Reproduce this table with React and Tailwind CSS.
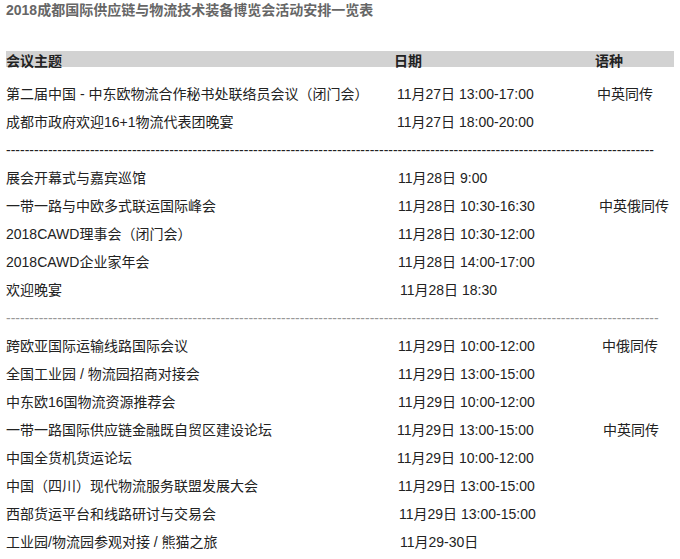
import React from 'react';

const font = "font-['Liberation_Sans','Noto_Sans_CJK_SC',sans-serif]";

// each row: topic, date, language, small x nudges for date/lang columns
const groups = [
  [
    ['第二届中国 - 中东欧物流合作秘书处联络员会议（闭门会）', '11月27日 13:00-17:00', '中英同传', 0, 0],
    ['成都市政府欢迎16+1物流代表团晚宴', '11月27日 18:00-20:00', '', 0, 0],
  ],
  [
    ['展会开幕式与嘉宾巡馆', '11月28日 9:00', '', 1, 0],
    ['一带一路与中欧多式联运国际峰会', '11月28日 10:30-16:30', '中英俄同传', 1, 2],
    ['2018CAWD理事会（闭门会）', '11月28日 10:30-12:00', '', 1, 0],
    ['2018CAWD企业家年会', '11月28日 14:00-17:00', '', 1, 0],
    ['欢迎晚宴', '11月28日 18:30', '', 3, 0],
  ],
  [
    ['跨欧亚国际运输线路国际会议', '11月29日 10:00-12:00', '中俄同传', 1, 5],
    ['全国工业园 / 物流园招商对接会', '11月29日 13:00-15:00', '', 1, 0],
    ['中东欧16国物流资源推荐会', '11月29日 10:00-12:00', '', 1, 0],
    ['一带一路国际供应链金融既自贸区建设论坛', '11月29日 13:00-15:00', '中英同传', 0, 6],
    ['中国全货机货运论坛', '11月29日 10:00-12:00', '', 0, 0],
    ['中国（四川）现代物流服务联盟发展大会', '11月29日 13:00-15:00', '', 1, 0],
    ['西部货运平台和线路研讨与交易会', '11月29日 13:00-15:00', '', 2, 0],
    ['工业园/物流园参观对接 / 熊猫之旅', '11月29-30日', '', 3, 0],
  ],
];

const nudge = ['pl-0', 'pl-px', 'pl-[2px]', 'pl-[3px]', 'pl-[4px]', 'pl-[5px]', 'pl-[6px]'];

const Row = ({ row }) => (
  <div className="grid grid-cols-[391px_200px_1fr] h-[28px] items-center">
    <div className="whitespace-nowrap">{row[0]}</div>
    <div className={`whitespace-nowrap ${nudge[row[3]]}`}>{row[1]}</div>
    <div className={`whitespace-nowrap ${nudge[row[4]]}`}>{row[2]}</div>
  </div>
);

const Dashes = ({ count, className }) => (
  <div className={`h-[28px] flex items-center whitespace-nowrap leading-none ${className}`}>
    {'-'.repeat(count)}
  </div>
);

export default function App() {
  return (
    <div className={`${font} bg-white w-[680px] h-[559px] overflow-hidden text-[14px] text-[#222] px-[6px]`}>
      <div className="h-[20px] flex items-center font-bold text-[#666]">
        2018成都国际供应链与物流技术装备博览会活动安排一览表
      </div>
      <div className="h-[31px]" />
      <div className="grid grid-cols-[388px_201px_1fr] h-[16px] items-center bg-[#d2d2d2] font-bold text-[#222] w-[668px]">
        <div>会议主题</div>
        <div>日期</div>
        <div>语种</div>
      </div>
      <div className="h-[13px]" />
      {groups[0].map((r, i) => <Row key={i} row={r} />)}
      <Dashes count={139} className="text-[#222]" />
      {groups[1].map((r, i) => <Row key={i} row={r} />)}
      <Dashes count={140} className="text-[#999]" />
      {groups[2].map((r, i) => <Row key={i} row={r} />)}
    </div>
  );
}
